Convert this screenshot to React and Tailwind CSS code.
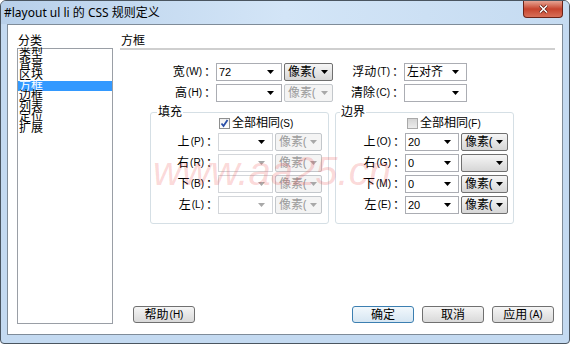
import React from "react";

const Arrow = ({ color = "#000" }) => (
  <svg width="7" height="4" viewBox="0 0 7 4" className="shrink-0">
    <path d="M0 0h7L3.5 4z" fill={color} />
  </svg>
);

function Combo({ cls, value, disabled, darkArrow, cjk }) {
  return (
    <div
      className={`${cls} flex h-[18px] shrink-0 items-center justify-between border bg-white pl-[2px] pr-[7px] ${
        disabled ? "border-[#d3d6da]" : "border-[#abadb3]"
      }`}
    >
      <span
        className={
          cjk
            ? "text-[12px] leading-[14px]"
            : "font-['Liberation_Sans',sans-serif] text-[11px] leading-[12px]"
        }
      >
        {value}
      </span>
      <Arrow color={darkArrow ? "#000" : disabled ? "#a8a8a8" : "#000"} />
    </div>
  );
}

function Unit({ cls, text = "像素(", disabled }) {
  return (
    <div
      className={`${cls} flex h-[18px] shrink-0 items-center justify-between rounded-[2px] border pl-[3px] pr-[4px] text-[12px] leading-[14px] ${
        disabled
          ? "border-[#c3c7cb] bg-[#f4f4f4] text-[#9c9c9c]"
          : "border-[#707070] bg-linear-to-b from-[#f6f6f6] to-[#d6d6d6] text-black"
      }`}
    >
      <span>{text}</span>
      <Arrow color={disabled ? "#a8a8a8" : "#000"} />
    </div>
  );
}

function Label({ cls, main, key2 }) {
  return (
    <div className={`${cls} flex shrink-0 items-center justify-end text-[12px] leading-[14px]`}>
      <span>{main}</span>
      <span className="ml-[1px] font-['Liberation_Sans',sans-serif] text-[10px]">({key2})</span>
      <span className="ml-[2px]">：</span>
    </div>
  );
}

function Check({ checked }) {
  return checked ? (
    <div className="flex h-[11px] w-[11px] items-center justify-center border border-[#8e8f8f] bg-linear-to-b from-[#f0f0f0] to-[#ffffff]">
      <svg width="9" height="9" viewBox="0 0 9 9">
        <path d="M1.5 4.5l2 2.5 4-6" fill="none" stroke="#2a4fa8" strokeWidth="1.8" />
      </svg>
    </div>
  ) : (
    <div className="h-[11px] w-[11px] border border-[#a9a9a9] bg-linear-to-b from-[#d4d4d4] to-[#ececec]" />
  );
}

function Btn({ children, def }) {
  return (
    <div
      className={`flex h-[17px] w-[62px] items-center justify-center rounded-[3px] border text-[12px] leading-[14px] ${
        def
          ? "border-[#3c7fb1] bg-linear-to-b from-[#f2f8fc] to-[#d6e6f2]"
          : "border-[#707070] bg-linear-to-b from-[#f5f5f5] to-[#d9d9d9]"
      }`}
    >
      {children}
    </div>
  );
}

const cats = ["类型", "背景", "区块", "方框", "边框", "列表", "定位", "扩展"];

export default function App() {
  return (
    <div className="h-[344px] w-[570px] overflow-hidden bg-white font-['Noto_Sans','Noto_Sans_CJK_SC',sans-serif] text-black">
      <div className="flex h-full w-full flex-col rounded-t-[6px] rounded-b-[4px] border border-[#4a5560] bg-[#c4daf1]">
        {/* title bar */}
        <div className="flex h-[23px] shrink-0 items-start justify-between rounded-t-[5px] bg-linear-to-r from-[#b8d0ea] via-[#d3e5f7] to-[#c5dbf1] pl-[3px] pr-[6px]">
          <span className="mt-[4px] text-[12px] leading-[15px]">#layout ul li 的 CSS 规则定义</span>
          <div className="flex h-[17px] w-[40px] items-center justify-center rounded-b-[4px] border border-t-0 border-[#6b2318] bg-linear-to-b from-[#e6a393] via-[#c6432d] to-[#d86f58]">
            <svg width="11" height="10" viewBox="0 0 11 10">
              <path d="M2 1.5l7 7M9 1.5l-7 7" stroke="#5a1a10" strokeWidth="3" />
              <path d="M2 1.5l7 7M9 1.5l-7 7" stroke="#fff" strokeWidth="1.6" />
            </svg>
          </div>
        </div>

        {/* client area */}
        <div className="relative mx-[6px] flex h-[311px] shrink-0 border border-[#7f8c99] bg-white pl-[9px] pt-[9px]">
          {/* left column */}
          <div className="flex w-[96px] shrink-0 flex-col">
            <div className="h-[14px] pl-[1px] text-[12px] leading-[14px]">分类</div>
            <div className="h-[276px] border border-[#9a9fa6] bg-white">
              {cats.map((c, i) => (
                <div
                  key={c}
                  className={`h-[10.5px] pl-[1px] text-[12px] leading-[10.5px] ${
                    i === 3 ? "bg-[#3399ff] text-white" : ""
                  }`}
                >
                  {c}
                </div>
              ))}
            </div>
          </div>

          {/* right column */}
          <div className="ml-[7px] flex h-[290px] w-[435px] flex-col">
            <div className="h-[16px] border-b-2 border-[#cfcfcf] pl-[1px] text-[12px] leading-[14px]">方框</div>

            {/* top rows */}
            <div className="mt-[13px] flex h-[18px]">
              <Label cls="w-[96px]" main="宽" key2="W" />
              <Combo cls="w-[66px]" value="72" />
              <Unit cls="ml-[2px] w-[49px]" />
              <Label cls="w-[71px]" main="浮动" key2="T" />
              <Combo cls="w-[63px]" value="左对齐" cjk />
            </div>
            <div className="mt-[3px] flex h-[18px]">
              <Label cls="w-[96px]" main="高" key2="H" />
              <Combo cls="w-[66px]" value="" />
              <Unit cls="ml-[2px] w-[49px]" disabled />
              <Label cls="w-[71px]" main="清除" key2="C" />
              <Combo cls="w-[63px]" value="" />
            </div>

            {/* fieldsets */}
            <div className="mt-[4px] flex gap-[6px] pl-[30px]">
              <fieldset className="w-[179px] rounded-[3px] border border-[#d5dfe5] pb-[9px]">
                <legend className="ml-[6px] px-[1px] text-[12px] leading-[12px]">填充</legend>
                <div className="flex h-[11px] items-center gap-[2px] pl-[68px]">
                  <Check checked />
                  <span className="text-[12px] leading-[12px]">
                    全部相同<span className="font-['Liberation_Sans',sans-serif] text-[10px]">(S)</span>
                  </span>
                </div>
                <div className="mt-[4px] flex flex-col gap-[3px]">
                  {[
                    ["上", "P", true],
                    ["右", "R", false],
                    ["下", "B", false],
                    ["左", "L", false],
                  ].map(([m, k, dark]) => (
                    <div key={k} className="flex h-[18px]">
                      <Label cls="w-[67px]" main={m} key2={k} />
                      <Combo cls="w-[55px]" value="" disabled darkArrow={dark} />
                      <Unit cls="ml-[2px] w-[47px]" disabled />
                    </div>
                  ))}
                </div>
              </fieldset>

              <fieldset className="w-[179px] rounded-[3px] border border-[#d5dfe5] pb-[9px]">
                <legend className="ml-[4px] px-[1px] text-[12px] leading-[12px]">边界</legend>
                <div className="flex h-[11px] items-center gap-[2px] pl-[71px]">
                  <Check />
                  <span className="text-[12px] leading-[12px]">
                    全部相同<span className="font-['Liberation_Sans',sans-serif] text-[10px]">(F)</span>
                  </span>
                </div>
                <div className="mt-[4px] flex flex-col gap-[3px]">
                  {[
                    ["上", "O", "20", "像素("],
                    ["右", "G", "0", ""],
                    ["下", "M", "0", "像素("],
                    ["左", "E", "20", "像素("],
                  ].map(([m, k, v, u]) => (
                    <div key={k} className="flex h-[18px]">
                      <Label cls="w-[69px]" main={m} key2={k} />
                      <Combo cls="w-[54px]" value={v} />
                      <Unit cls="ml-[2px] w-[47px]" text={u} />
                    </div>
                  ))}
                </div>
              </fieldset>
            </div>

            {/* buttons */}
            <div className="mb-[1px] mt-auto flex items-end pl-[13px] pr-[1px]">
              <Btn>
                帮助<span className="ml-[1px] font-['Liberation_Sans',sans-serif] text-[10px]">(H)</span>
              </Btn>
              <div className="ml-auto flex gap-[8px]">
                <Btn def>确定</Btn>
                <Btn>取消</Btn>
                <Btn>
                  应用<span className="ml-[2px] font-['Liberation_Sans',sans-serif] text-[10px]">(A)</span>
                </Btn>
              </div>
            </div>
          </div>

          {/* watermark */}
          <div className="pointer-events-none absolute left-[145px] top-[126px] font-['Liberation_Sans',sans-serif] text-[40px] italic leading-[40px] text-[#eb3c3c]/20">
            www.aa25.cn
          </div>
        </div>
      </div>
    </div>
  );
}
